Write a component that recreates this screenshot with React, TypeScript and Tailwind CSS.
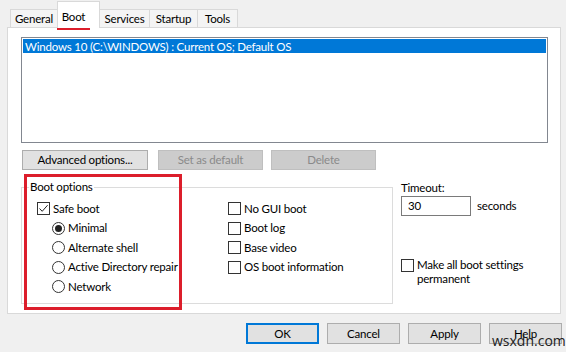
import React from "react";

function CheckBox({ checked = false }: { checked?: boolean }) {
  return (
    <span className="w-[13px] h-[13px] border border-[#333333] bg-white flex items-center justify-center shrink-0">
      {checked && (
        <svg width="11" height="11" viewBox="0 0 11 11">
          <path d="M1.5 5.5 L4.2 8.3 L9.6 2.2" fill="none" stroke="#222" strokeWidth="1" />
        </svg>
      )}
    </span>
  );
}

function Radio({ checked = false }: { checked?: boolean }) {
  return (
    <span className="w-[13px] h-[13px] rounded-full border border-[#333333] bg-white flex items-center justify-center shrink-0">
      {checked && <span className="w-[7px] h-[7px] rounded-full bg-[#222222]" />}
    </span>
  );
}

export default function App() {
  return (
    <div
      className="relative w-[566px] h-[352px] bg-[#f0f0f0] overflow-hidden text-[11.5px] tracking-[-0.2px] text-black leading-[14px]"
      style={{ fontFamily: '"Lato", "Noto Sans", sans-serif' }}
    >
      {/* Tabs */}
      <div className="h-[27px] flex items-end pl-[10px]">
        <div className="h-[18px] w-[48px] border border-b-0 border-[#d9d9d9] bg-[#f4f4f4] flex items-center justify-center">
          General
        </div>
        <div className="relative z-10 h-[27px] w-[43px] -mb-px border border-b-0 border-[#d9d9d9] bg-white flex items-start justify-center pt-[8px] -ml-px pr-[10px]">
          Boot
        </div>
        <div className="h-[18px] w-[51px] border border-b-0 border-[#d9d9d9] bg-[#f4f4f4] flex items-center justify-center -ml-px">
          Services
        </div>
        <div className="h-[18px] w-[49px] border border-b-0 border-[#d9d9d9] bg-[#f4f4f4] flex items-center justify-center -ml-px">
          Startup
        </div>
        <div className="h-[18px] w-[41px] border border-b-0 border-[#d9d9d9] bg-[#f4f4f4] flex items-center justify-center -ml-px">
          Tools
        </div>
      </div>

      {/* Panel */}
      <div className="ml-[7px] w-[554px] h-[287px] border border-[#d9d9d9] bg-white flex flex-col">
        {/* List */}
        <div className="ml-[13px] mt-[9px] w-[527px] h-[106px] border border-[#828790] bg-white p-px">
          <div className="h-[14px] bg-[#0078d7] text-white flex items-center pl-[2px] leading-[13px]">
            Windows 10 (C:\WINDOWS) : Current OS; Default OS
          </div>
        </div>

        {/* Buttons */}
        <div className="ml-[14px] mt-[7px] flex">
          <div className="w-[126px] h-[20px] border border-[#adadad] bg-[#e1e1e1] flex items-center justify-center">
            Advanced options...
          </div>
          <div className="ml-[10px] w-[105px] h-[20px] border border-[#bfbfbf] bg-[#cccccc] text-[#8a8a8a] flex items-center justify-center">
            Set as default
          </div>
          <div className="ml-[8px] w-[105px] h-[20px] border border-[#bfbfbf] bg-[#cccccc] text-[#8a8a8a] flex items-center justify-center">
            Delete
          </div>
        </div>

        {/* Lower section */}
        <div className="mt-[10px] flex">
          {/* Group box */}
          <div className="ml-[13px] pt-[7px]">
            <div className="relative w-[372px] h-[117px] border border-[#dcdcdc] flex pt-[11px]">
              <span className="absolute left-[7px] -top-[8px] bg-white px-[1px]">Boot options</span>
              <div className="pl-[15px] w-[206px] flex flex-col">
                <div className="h-[19.5px] flex items-center gap-[3px]">
                  <CheckBox checked />
                  <span>Safe boot</span>
                </div>
                <div className="h-[19.5px] flex items-center gap-[3px] pl-[15px]">
                  <Radio checked />
                  <span>Minimal</span>
                </div>
                <div className="h-[19.5px] flex items-center gap-[3px] pl-[15px]">
                  <Radio />
                  <span>Alternate shell</span>
                </div>
                <div className="h-[19.5px] flex items-center gap-[3px] pl-[15px]">
                  <Radio />
                  <span>Active Directory repair</span>
                </div>
                <div className="h-[19.5px] flex items-center gap-[3px] pl-[15px]">
                  <Radio />
                  <span>Network</span>
                </div>
              </div>
              <div className="flex flex-col">
                {["No GUI boot", "Boot log", "Base video", "OS boot information"].map((t) => (
                  <div key={t} className="h-[19.5px] flex items-center gap-[3px]">
                    <CheckBox />
                    <span>{t}</span>
                  </div>
                ))}
              </div>
            </div>
          </div>

          {/* Right column */}
          <div className="ml-[8px] flex flex-col">
            <div className="h-[15px] flex items-center">Timeout:</div>
            <div className="mt-[1px] flex items-center">
              <div className="w-[70px] h-[20px] border border-[#7a7a7a] bg-white flex items-center pl-[6px]">30</div>
              <span className="ml-[6px]">seconds</span>
            </div>
            <div className="mt-[43px] flex items-start gap-[3px]">
              <CheckBox />
              <span className="leading-[13.5px] -mt-px">
                Make all boot settings
                <br />
                permanent
              </span>
            </div>
          </div>
        </div>
      </div>

      {/* Bottom buttons */}
      <div className="mt-[9px] flex justify-end pr-[4px] gap-[8px]">
        <div className="w-[73px] h-[21px] border-2 border-[#0078d7] bg-[#e1e1e1] flex items-center justify-center">OK</div>
        <div className="w-[73px] h-[21px] border border-[#adadad] bg-[#e1e1e1] flex items-center justify-center">Cancel</div>
        <div className="w-[73px] h-[21px] border border-[#adadad] bg-[#e1e1e1] flex items-center justify-center">Apply</div>
        <div className="w-[73px] h-[21px] border border-[#adadad] bg-[#e1e1e1] flex items-center justify-center">Help</div>
      </div>

      {/* Annotations */}
      <div className="absolute left-[57px] top-[1px] w-[33px] h-[29px] border-[3px] border-[#dc1e2b]" />
      <div className="absolute left-[24px] top-[174px] w-[158px] h-[136px] border-[3px] border-[#dc1e2b]" />
      <span className="absolute left-[492px] top-[333px] text-[14px] leading-[16px] tracking-normal text-[#222]" style={{ fontFamily: '"Open Sans", sans-serif' }}>
        wsxdn.com
      </span>
    </div>
  );
}
